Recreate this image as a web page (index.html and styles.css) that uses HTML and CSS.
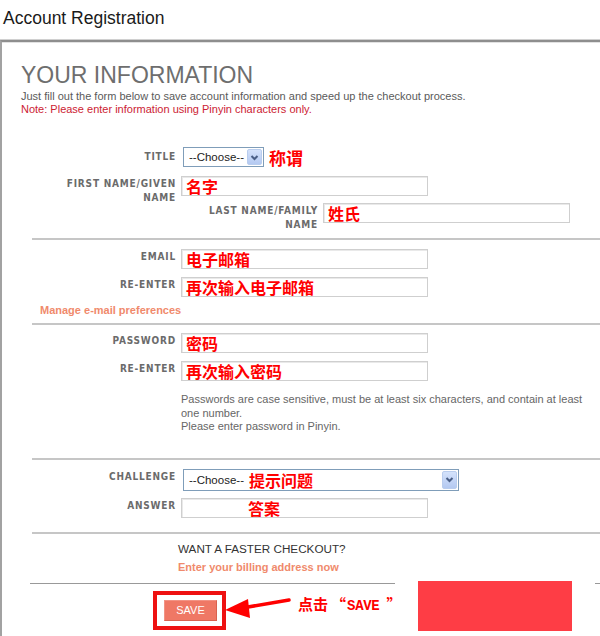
FILE: index.html
```html
<!DOCTYPE html>
<html lang="en">
<head>
<meta charset="utf-8">
<title>Account Registration</title>
<link rel="stylesheet" href="styles.css">
</head>
<body>
<h1 class="page-title">Account Registration</h1>
<div class="panel">
  <h2 class="panel-title">YOUR INFORMATION</h2>
  <p class="intro">Just fill out the form below to save account information and speed up the checkout process.</p>
  <p class="note">Note: Please enter information using Pinyin characters only.</p>
  <div class="form">
    <section class="sec sec-name">
      <div class="row row-title">
        <div class="lbl">TITLE</div>
        <div class="select sel-title">
          <span class="sel-text">--Choose--</span>
          <span class="sel-btn"><svg width="13" height="15" viewBox="0 0 13 15"><path d="M3.5 6 L6.5 9 L9.5 6" fill="none" stroke="#4a5f86" stroke-width="2"/></svg></span>
        </div>
        <span class="ann ann-title" lang="zh-CN">称谓</span>
      </div>
      <div class="row row-first">
        <div class="lbl">FIRST NAME/GIVEN NAME</div>
        <div class="input"><span class="ann" lang="zh-CN">名字</span></div>
      </div>
      <div class="row row-last">
        <div class="lbl">LAST NAME/FAMILY NAME</div>
        <div class="input"><span class="ann" lang="zh-CN">姓氏</span></div>
      </div>
    </section>
    <section class="sec sec-email">
      <div class="row row-email">
        <div class="lbl">EMAIL</div>
        <div class="input"><span class="ann" lang="zh-CN">电子邮箱</span></div>
      </div>
      <div class="row row-email2">
        <div class="lbl">RE-ENTER</div>
        <div class="input"><span class="ann" lang="zh-CN">再次输入电子邮箱</span></div>
      </div>
      <a class="manage">Manage e-mail preferences</a>
    </section>
    <section class="sec sec-pass">
      <div class="row row-pass">
        <div class="lbl">PASSWORD</div>
        <div class="input"><span class="ann" lang="zh-CN">密码</span></div>
      </div>
      <div class="row row-pass2">
        <div class="lbl">RE-ENTER</div>
        <div class="input"><span class="ann" lang="zh-CN">再次输入密码</span></div>
      </div>
      <p class="pw-help">Passwords are case sensitive, must be at least six characters, and contain at least one number.<br>Please enter password in Pinyin.</p>
    </section>
    <section class="sec sec-challenge">
      <div class="row row-challenge">
        <div class="lbl">CHALLENGE</div>
        <div class="select sel-challenge">
          <span class="sel-text">--Choose--</span>
          <span class="ann ann-inline" lang="zh-CN">提示问题</span>
          <span class="sel-btn"><svg width="13" height="17" viewBox="0 0 13 17"><path d="M3.5 7 L6.5 10 L9.5 7" fill="none" stroke="#4a5f86" stroke-width="2"/></svg></span>
        </div>
      </div>
      <div class="row row-answer">
        <div class="lbl">ANSWER</div>
        <div class="input input-answer"><span class="ann" lang="zh-CN">答案</span></div>
      </div>
    </section>
    <section class="sec sec-checkout">
      <p class="faster">WANT A FASTER CHECKOUT?</p>
      <a class="billing">Enter your billing address now</a>
    </section>
  </div>
  <div class="save-area">
    <div class="save-row">
      <span class="hilite"><button class="save-btn" type="button">SAVE</button></span>
      <svg class="arrow" width="68" height="24" viewBox="0 0 68 24">
        <path d="M64 3 L20 10.5" stroke="#ff0000" stroke-width="3.5" stroke-linecap="round" fill="none"/>
        <path d="M0 13 L23 2 L25 21 Z" fill="#ff0000"/>
      </svg>
      <span class="click-note" lang="zh-CN">点击<span class="q q-open">“</span><span class="latin">SAVE </span><span class="q q-close">”</span></span>
    </div>
  </div>
</div>
<div class="redact"><div class="redact-fill"></div></div>
</body>
</html>
```
FILE: styles.css
```css
html, body {
  margin: 0;
  padding: 0;
  background: #fff;
  overflow: hidden;
}
body {
  font-family: "Liberation Sans", Arial, sans-serif;
  color: #333;
  width: 600px;
  height: 636px;
  position: relative;
}
.page-title {
  margin: 0;
  padding: 7px 0 0 3px;
  font-size: 17.5px;
  line-height: 22px;
  font-weight: normal;
  color: #1a1a1a;
}
.panel {
  margin-top: 11px;
  border-top: 2px solid #8e8e8e;
  border-left: 2px solid #a2a2a2;
  box-shadow: 0 -1px 0 #d0d0d0, inset 0 1px 0 #e2e2e2;
  padding: 20px 0 0 19px;
  height: 600px;
}
.panel-title {
  margin: 0;
  font-size: 23px;
  line-height: 26px;
  font-weight: normal;
  color: #6e6e6e;
}
.intro, .note {
  margin: 0;
  font-size: 11px;
  line-height: 13px;
}
.intro { margin-top: 2px; color: #5a5a5a; }
.note { color: #cc2233; }
.form {
  margin-left: 11px;
}
.sec {
  border-top: 2px solid #c6c6c6;
}
.sec-name {
  border-top: none;
  padding-top: 31px;
}
.row {
  display: flex;
  align-items: flex-start;
}
.lbl {
  width: 117px;
  margin-left: 27px;
  margin-right: 5px;
  text-align: right;
  font-family: "DejaVu Sans Condensed", "DejaVu Sans", Verdana, sans-serif;
  font-stretch: condensed;
  font-weight: bold;
  font-size: 10px;
  letter-spacing: 0.8px;
  line-height: 14px;
  padding-top: 1px;
  color: #6b6b6b;
}
.input {
  height: 18px;
  border: 1px solid #cfcfcf;
  box-shadow: inset 1px 1px 0 #e9e9e9;
  padding-left: 4px;
  box-sizing: content-box;
  display: flex;
  align-items: center;
  width: 241px;
}
.ann {
  font-family: "Noto Sans CJK SC", sans-serif;
  font-weight: bold;
  font-size: 16px;
  line-height: 18px;
  color: #ff0000;
}
.select {
  margin-left: 2px;
  border: 1px solid #7f9db9;
  background: #fff;
  display: flex;
  align-items: center;
  box-sizing: border-box;
  padding: 0 1px 0 5px;
}
.sel-text {
  font-size: 11.5px;
  color: #222;
}
.sel-btn {
  margin-left: auto;
  display: flex;
  align-items: center;
  justify-content: center;
  background: linear-gradient(#d4e2fb, #b4c9f1);
  border: 1px solid #b9cdee;
  border-radius: 2px;
  box-sizing: border-box;
}
.sel-title { width: 81px; height: 20px; }
.sel-title .sel-btn { width: 15px; height: 16px; margin-left: 3px; }
.sel-title .sel-text { white-space: nowrap; }
.ann-title { margin-left: 5px; font-size: 17px; margin-top: 2px; }
.sel-challenge { width: 276px; height: 22px; }
.sel-challenge .sel-btn { width: 15px; height: 18px; }
.ann-inline { margin-left: 5px; font-size: 16px; }

.row-title { height: 29px; }
.row-title .lbl { padding-top: 3px; }
.row-first { height: 27px; }
.row-last { height: 35px; }
.row-last .lbl { margin-left: 169px; }

.sec-email { padding-top: 9px; }
.row-email { height: 28px; }
.row-email2 { height: 26px; }
.manage {
  display: block;
  margin-left: 8px;
  font-size: 11px;
  line-height: 14px;
  font-weight: bold;
  color: #f08a6c;
  padding-bottom: 6px;
}

.sec-pass { padding-top: 8px; padding-bottom: 24px; }
.row-pass { height: 28px; }
.row-pass2 { height: 20px; }
.pw-help {
  margin: 12px 0 0 149px;
  font-size: 11px;
  line-height: 13.5px;
  color: #666;
  padding-right: 10px;
}

.sec-challenge { padding-top: 9px; padding-bottom: 14px; }
.row-challenge { height: 29px; }
.row-answer { height: 20px; }
.input-answer { padding-left: 66px; width: 179px; }

.sec-checkout { padding: 8px 0 9px 146px; }
.faster {
  margin: 0;
  font-size: 11.7px;
  line-height: 14px;
  color: #333;
}
.billing {
  display: block;
  margin-top: 4px;
  font-size: 11px;
  line-height: 14px;
  font-weight: bold;
  color: #f08a6c;
}

.save-area {
  margin-left: 9px;
  border-top: 1px solid #999;
  padding-top: 7px;
}
.save-row {
  display: flex;
  align-items: flex-start;
}
.hilite {
  margin-left: 123px;
  border: 4px solid #ee1111;
  padding: 5px 5px 5px 7px;
  display: flex;
  background: #fff;
}
.save-btn {
  width: 53px;
  height: 21px;
  margin: 0;
  padding: 0;
  border: 1px solid #d9624f;
  border-top-color: #f29384;
  border-left-color: #f29384;
  background: #ef7865;
  color: #fff;
  font-family: "Liberation Sans", Arial, sans-serif;
  font-size: 11px;
  line-height: 19px;
}
.arrow {
  margin-top: 6px;
  margin-left: -1px;
}
.click-note {
  margin-left: 5px;
  margin-top: 4px;
  font-family: "Noto Sans CJK SC", sans-serif;
  font-weight: bold;
  font-size: 15px;
  line-height: 18px;
  color: #ff0000;
  white-space: nowrap;
}
.click-note .q-open {
  margin-left: 3px;
  margin-right: 1px;
}
.click-note .q-close {
  margin-left: -1px;
}
.click-note .latin {
  font-family: "Liberation Mono", "Courier New", monospace;
  font-size: 14px;
  letter-spacing: -0.3px;
  white-space: pre;
}
.redact {
  position: absolute;
  left: 395px;
  top: 581px;
  width: 200px;
  height: 55px;
  background: #fff;
}
.redact-fill {
  margin-left: 23px;
  width: 154px;
  height: 50px;
  background: #fe3d45;
}
```
